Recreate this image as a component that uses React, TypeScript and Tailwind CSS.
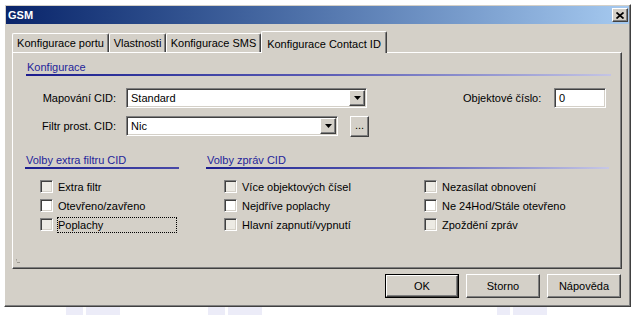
import React from 'react';

const raised =
  'border-t border-l border-r border-b border-t-white border-l-white border-r-[#404040] border-b-[#404040] shadow-[inset_-1px_-1px_0_#808080]';
const sunken =
  'border-t border-l border-r border-b border-t-[#808080] border-l-[#808080] border-r-white border-b-white shadow-[inset_1px_1px_0_#404040,inset_-1px_-1px_0_#d4d0c8]';

function DownArrow() {
  return (
    <svg width="7" height="4" viewBox="0 0 7 4">
      <path d="M0 0h7L3.5 4z" fill="#000" />
    </svg>
  );
}

function Combo({ value, width }: { value: string; width: string }) {
  return (
    <div className={`${width} h-[20px] bg-white flex items-center ${sunken} p-[1px]`}>
      <span className="flex-1 pl-[3px] leading-[14px]">{value}</span>
      <div className={`w-[16px] h-full bg-[#d4d0c8] flex items-center justify-center ${raised}`}>
        <DownArrow />
      </div>
    </div>
  );
}

function Check({
  label,
  disabled,
  focused,
}: {
  label: string;
  disabled?: boolean;
  focused?: boolean;
}) {
  return (
    <div className="flex items-center h-[19px]">
      <div
        className={`w-[13px] h-[13px] shrink-0 ${sunken} ${disabled ? 'bg-[#eceae4]' : 'bg-white'}`}
      />
      <span
        className={`ml-[4px] h-[16px] leading-[14px] border whitespace-nowrap ${
          focused ? 'w-[120px] border-dotted border-black' : 'border-transparent'
        }`}
      >
        {label}
      </span>
    </div>
  );
}

function GroupHeader({ title, line }: { title: string; line: string }) {
  return (
    <div>
      <div className="h-[14px] leading-[14px] pl-[1px] text-[#1f1f9a]">{title}</div>
      <div className={`h-[2px] bg-linear-to-r ${line}`} />
    </div>
  );
}

function Button({ label, primary }: { label: string; primary?: boolean }) {
  if (primary) {
    return (
      <div className="w-[74px] h-[24px] border border-black">
        <div className={`w-full h-full flex items-center justify-center bg-[#d4d0c8] ${raised}`}>
          {label}
        </div>
      </div>
    );
  }
  return (
    <div className={`w-[74px] h-[24px] flex items-center justify-center bg-[#d4d0c8] ${raised}`}>
      {label}
    </div>
  );
}

export default function App() {
  const tabs = [
    { label: 'Konfigurace portu', w: 'w-[97px]' },
    { label: 'Vlastnosti', w: 'w-[57px]' },
    { label: 'Konfigurace SMS', w: 'w-[95px]' },
  ];

  return (
    <div className="w-[639px] h-[315px] bg-white overflow-hidden flex flex-col font-['Liberation_Sans',Arial,sans-serif] text-[11px] text-black">
      {/* okno dialogu */}
      <div
        className={`ml-[4px] mt-[4px] w-[627px] h-[303px] bg-[#d4d0c8] p-[1px] flex flex-col ${raised}`}
      >
        <div className="h-[18px] bg-linear-to-r from-[#0a246a] to-[#a6caf0] flex items-center justify-between pl-[2px] pr-[1px]">
          <span className="text-white font-bold leading-[14px]">GSM</span>
          <div className={`w-[16px] h-[14px] bg-[#d4d0c8] flex items-center justify-center ${raised}`}>
            <svg width="8" height="7" viewBox="0 0 8 7">
              <path d="M0.5 0.5L7.5 6.5M7.5 0.5L0.5 6.5" stroke="#000" strokeWidth="1.7" />
            </svg>
          </div>
        </div>

        <div className="ml-[6px] mt-[7px] w-[610px] flex flex-col">
          {/* záložky */}
          <div className="h-[21px] flex items-end">
            {tabs.map((t) => (
              <div
                key={t.label}
                className={`${t.w} h-[19px] flex items-center justify-center border-t border-l border-r border-t-white border-l-white border-r-[#404040] shadow-[inset_-1px_0_0_#808080] rounded-t-[2px] whitespace-nowrap`}
              >
                {t.label}
              </div>
            ))}
            <div className="relative z-10 w-[126px] h-[22px] -mb-[1px] bg-[#d4d0c8] flex items-start pt-[4px] justify-center border-t border-l border-r border-t-white border-l-white border-r-[#404040] shadow-[inset_-1px_0_0_#808080] rounded-t-[2px] whitespace-nowrap">
              Konfigurace Contact ID
            </div>
          </div>

          {/* obsah záložky */}
          <div className={`w-[610px] h-[217px] flex flex-col ${raised}`}>
            <div className="ml-[13px] mt-[7px] w-[585px]">
              <GroupHeader title="Konfigurace" line="from-[#1c1c8e] via-[#5a5ab4] to-[#c4c4e4]" />
            </div>

            <div className="mt-[12px] flex items-center h-[20px]">
              <div className="w-[103px] text-right">Mapování CID:</div>
              <div className="ml-[10px]">
                <Combo value="Standard" width="w-[241px]" />
              </div>
              <div className="ml-[96px] w-[91px]">Objektové číslo:</div>
              <div className={`w-[52px] h-[20px] bg-white flex items-center pl-[4px] ${sunken}`}>0</div>
            </div>

            <div className="mt-[8px] flex items-center h-[20px]">
              <div className="w-[103px] text-right">Filtr prost. CID:</div>
              <div className="ml-[10px]">
                <Combo value="Nic" width="w-[212px]" />
              </div>
              <div
                className={`ml-[12px] w-[19px] h-[21px] flex items-center justify-center bg-[#d4d0c8] ${raised}`}
              >
                <span className="leading-[10px] pb-[2px]">...</span>
              </div>
            </div>

            <div className="mt-[17px] flex">
              <div className="ml-[12px] w-[154px]">
                <GroupHeader title="Volby extra filtru CID" line="from-[#1c1c8e] to-[#4848a8]" />
                <div className="mt-[8px] pl-[15px]">
                  <Check label="Extra filtr" disabled />
                  <Check label="Otevřeno/zavřeno" />
                  <Check label="Poplachy" disabled focused />
                </div>
              </div>
              <div className="ml-[27px] w-[403px]">
                <GroupHeader title="Volby zpráv CID" line="from-[#1c1c8e] via-[#5a5ab4] to-[#c8c8e6]" />
                <div className="mt-[8px] flex">
                  <div className="w-[218px] pl-[18px]">
                    <Check label="Více objektových čísel" disabled />
                    <Check label="Nejdříve poplachy" />
                    <Check label="Hlavní zapnutí/vypnutí" disabled />
                  </div>
                  <div>
                    <Check label="Nezasílat obnovení" disabled />
                    <Check label="Ne 24Hod/Stále otevřeno" />
                    <Check label="Zpoždění zpráv" disabled />
                  </div>
                </div>
              </div>
            </div>

            <div className="mt-auto mb-[5px] ml-[3px]">
              <svg width="4" height="4" viewBox="0 0 4 4">
                <path d="M0 0h1v4h3v-1H1z" fill="#9a978f" />
              </svg>
            </div>
          </div>

          {/* tlačítka */}
          <div className="mt-[5px] flex justify-end gap-[7px] pr-[1px]">
            <Button label="OK" primary />
            <Button label="Storno" />
            <Button label="Nápověda" />
          </div>
        </div>
      </div>

      {/* světlé pozadí pod oknem */}
      <div className="h-[8px] flex">
        <div className="ml-[66px] w-[17px] bg-[#ececf8]" />
        <div className="ml-[3px] w-[34px] bg-[#ececf8]" />
        <div className="ml-[88px] w-[17px] bg-[#ececf8]" />
        <div className="ml-[3px] w-[34px] bg-[#ececf8]" />
        <div className="ml-[235px] w-[13px] bg-[#ececf8]" />
        <div className="ml-[3px] w-[34px] bg-[#ececf8]" />
      </div>
    </div>
  );
}
